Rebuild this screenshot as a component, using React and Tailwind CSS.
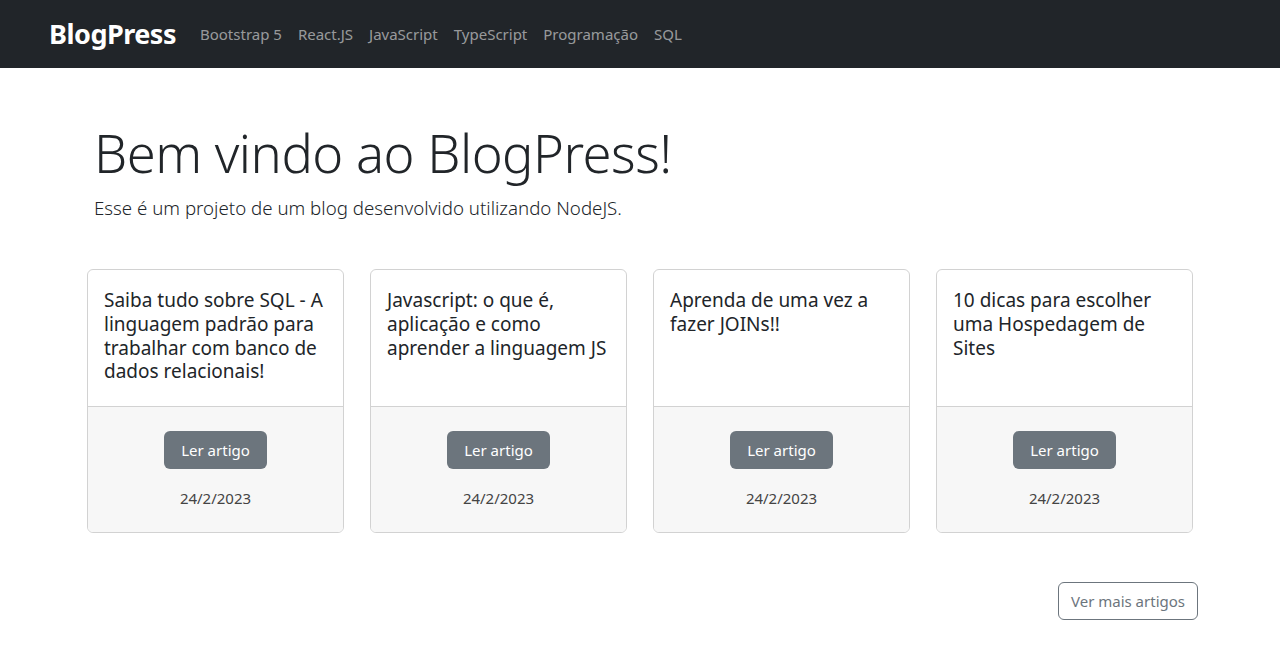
import React from "react";

const links = ["Bootstrap 5", "React.JS", "JavaScript", "TypeScript", "Programação", "SQL"];

const articles = [
  { title: "Saiba tudo sobre SQL - A linguagem padrão para trabalhar com banco de dados relacionais!", date: "24/2/2023" },
  { title: "Javascript: o que é, aplicação e como aprender a linguagem JS", date: "24/2/2023" },
  { title: "Aprenda de uma vez a fazer JOINs!!", date: "24/2/2023" },
  { title: "10 dicas para escolher uma Hospedagem de Sites", date: "24/2/2023" },
];

export default function App() {
  return (
    <div className="min-h-screen bg-white text-[#212529] font-['Noto_Sans','Open_Sans',sans-serif]">
      {/* Navbar */}
      <nav className="h-[68px] bg-[#212529] flex items-center pl-[49px] pt-[1px]">
        <span className="text-white font-bold text-[27px] tracking-[-0.5px] mr-[16px]">BlogPress</span>
        <div className="flex items-center">
          {links.map((l) => (
            <a key={l} className="px-[8px] text-[15px] text-[rgba(255,255,255,0.55)]">
              {l}
            </a>
          ))}
        </div>
      </nav>

      {/* Jumbotron */}
      <div className="pl-[94px] pt-[53px] pb-[47px]">
        <h1 className="text-[52.5px] font-light leading-[1.2] tracking-[-0.5px]">Bem vindo ao BlogPress!</h1>
        <p className="text-[18.7px] font-light mt-[10px]">Esse é um projeto de um blog desenvolvido utilizando NodeJS.</p>
      </div>

      {/* Cards */}
      <div className="flex gap-[26px] px-[87px]">
        {articles.map((a) => (
          <div key={a.title} className="w-[258px] h-[264px] border border-[rgba(0,0,0,0.175)] rounded-[6px] flex flex-col overflow-hidden">
            <div className="h-[137px] px-[16px] pt-[19px] border-b border-[rgba(0,0,0,0.175)]">
              <h5 className="text-[19px] leading-[1.25]">{a.title}</h5>
            </div>
            <div className="flex-1 bg-[#f7f7f7] flex flex-col items-center pt-[24px]">
              <button className="bg-[#6c757d] text-white text-[15px] rounded-[6px] h-[38px] px-[17px]">Ler artigo</button>
              <span className="mt-[18px] text-[15px] text-[#444]">{a.date}</span>
            </div>
          </div>
        ))}
      </div>

      <div className="flex justify-end pr-[82px] mt-[49px]">
        <button className="border border-[#6c757d] text-[#6c757d] text-[15px] rounded-[6px] h-[38px] px-[12px]">Ver mais artigos</button>
      </div>
    </div>
  );
}
